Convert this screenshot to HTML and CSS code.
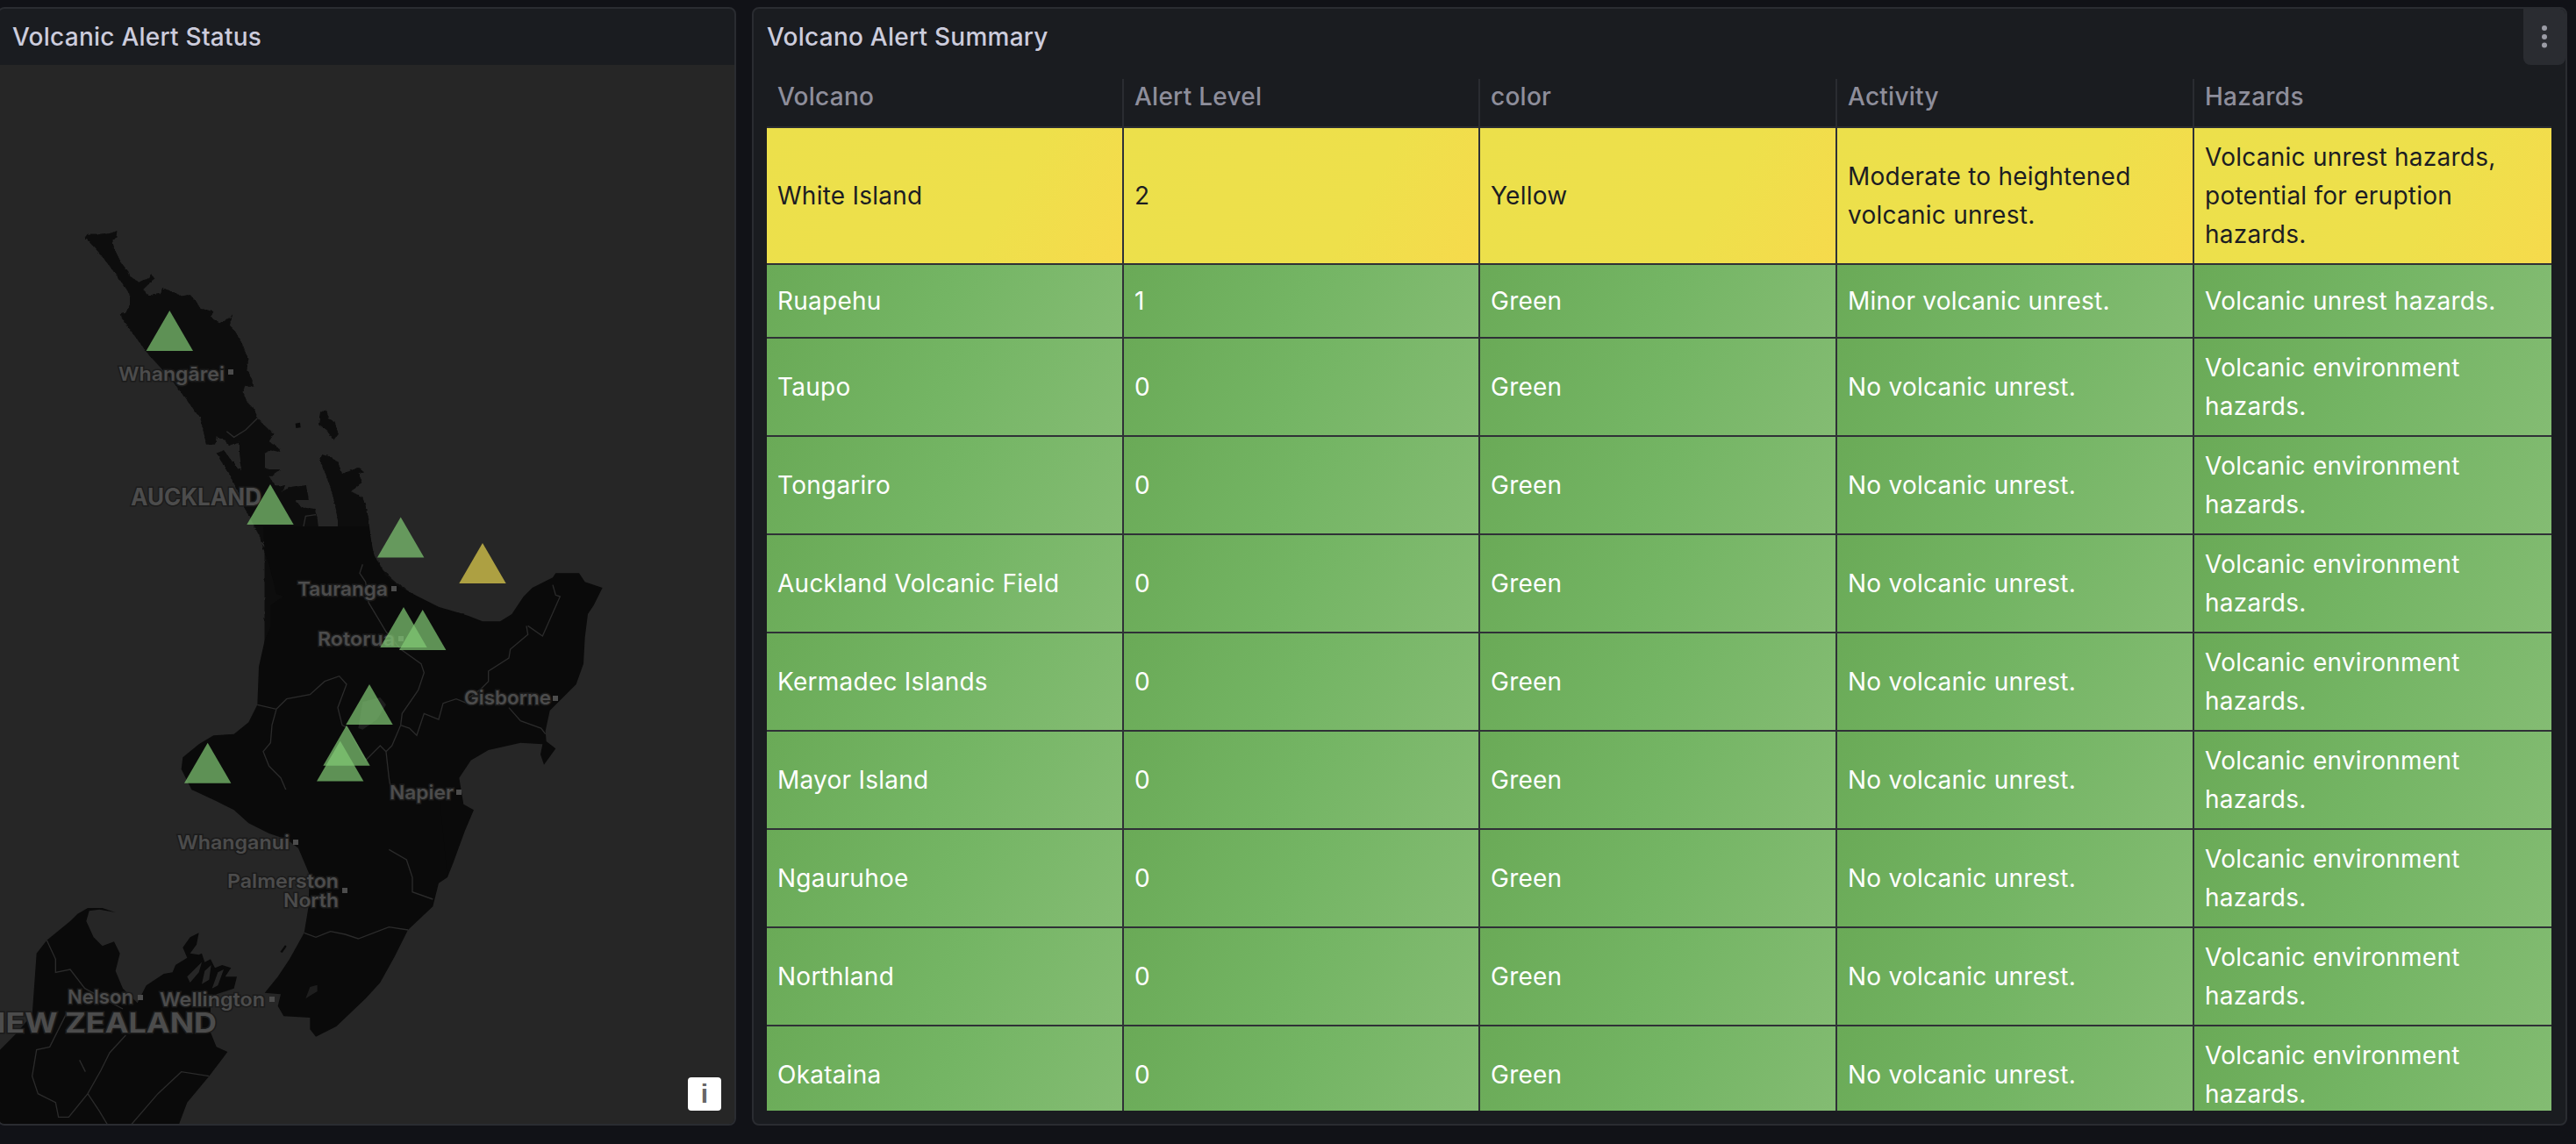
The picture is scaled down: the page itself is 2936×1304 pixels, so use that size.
FILE: index.html
```html
<!DOCTYPE html>
<html lang="en">

<head>
    <meta charset="UTF-8">
    <title>Volcano Alerts</title>
    <link rel="stylesheet" href="styles.css">
</head>

<body>
    <section class="panel map-panel">
        <h2 class="panel-title">Volcanic Alert Status</h2>
        <div class="map">
            <svg class="map-svg" viewBox="0 0 839 1207" width="839" height="1207">
                <defs>
                    <polygon id="tri" points="0,0 26.7,46 -26.7,46"></polygon>
                    <filter id="rough" x="-5%" y="-5%" width="110%" height="110%">
                        <feTurbulence type="fractalNoise" baseFrequency=".045" numOctaves="3" seed="4"></feTurbulence>
                        <feDisplacementMap in="SourceGraphic" scale="9" xChannelSelector="R" yChannelSelector="G"></feDisplacementMap>
                    </filter>
                </defs>
                <g transform="translate(0,-74)">
                    <!-- north island, top part traced on a 3x crop -->
                    <g transform="translate(80,250) scale(.33333)">
                        <path class="land" filter="url(#rough)" d="M50 62 60 50 100 50 135 48 160 40 158 60 145 75 150 100 175 150 200 180 205 195 235 215 245 210 272 200 275 185 290 205 265 225 250 240 270 260 310 255 315 235 345 245 380 262 410 258 430 280 445 305 490 315 480 335 510 355 545 340 555 325 545 365 565 385 590 430 610 480 605 510 620 545 628 573 600 565 590 590 605 625 630 650 640 680 695 735 680 760 715 785 718 795 685 790 665 800 665 850 680 855 720 855 680 880 700 910 735 910 725 930 755 915 810 910 815 960 770 960 790 985 835 990 845 1020 850 1075 880 1085 915 1065 915 1030 905 970 885 900 855 825 860 805 885 810 915 830 930 870 985 850 1005 865 985 870 1000 900 960 930 1000 950 1020 1020 1030 1120 1040 1150 1070 1200 1120 1245 1190 1295 1260 1335 1350 1350 1000 1500 665 1500 665 1140 650 1090 625 1040 595 985 570 920 530 850 500 800 525 790 570 850 585 860 580 800 580 760 540 775 530 755 500 745 495 770 465 770 455 720 445 680 400 620 340 540 270 465 210 385 170 325 190 320 205 290 205 260 190 235 150 180 100 115Z"></path>
                        <path class="land" filter="url(#rough)" d="M855 660 875 650 885 680 905 695 917 735 900 755 880 725 850 700Z"></path>
                        <path class="land" d="M770 698 786 695 788 712 772 714Z"></path>
                        <path class="region" d="M660 1105 730 1080 795 1065 805 1015 840 1010M640 680 600 720 560 745 535 725M655 1105 680 1140"></path>
                        <path class="lake" d="M805 1160 822 1158 828 1180 812 1184Z"></path>
                    </g>
                    <!-- middle of the north island -->
                    <g transform="translate(200,600) scale(.33333)">
                        <path class="land" d="M680 105 720 170 760 205 830 240 900 275 1000 305 1050 325 1110 325 1150 300 1190 240 1220 210 1290 175 1300 160 1380 160 1400 190 1460 210 1430 270 1410 300 1400 380 1395 470 1370 540 1310 600 1280 630 1265 700 1268 735 1300 760 1260 815 1248 780 1255 745 1180 740 1070 765 1010 800 970 860 985 950 1020 970 990 1040 950 1150 930 1200 400 1000 55 900 20 830 25 790 80 745 130 715 200 710 250 670 280 610 285 480 305 390 325 345 325 270 345 255 370 240 345 230 320 130 305 90 300 0 660 0Z"></path>
                        <path class="region" d="M640 130 630 160 650 190 660 260 690 310 720 360 770 420 840 470 850 500 830 560 775 640 770 680 740 750 720 770 730 860 745 950 750 1000 730 1070 725 1105 770 1120 805 1170 810 1200M770 680 800 690 825 715 850 640 900 660 915 605 960 590 1010 610M1200 340 1205 370 1145 420 1140 450 1070 495 1070 530 1040 560 990 595M1290 200 1300 235 1315 240 1255 375 1205 340M1140 620 1180 665 1250 690 1265 710M280 610 345 625 380 590 460 575 510 530 560 512 585 540 555 620 570 680 590 690 650 800 700 750 720 770M345 625 330 680 325 740 300 770 320 820 360 860 390 930 385 980 330 1050"></path>
                        <path class="lake" d="M640 600 700 585 720 610 690 660 640 695 625 690Z"></path>
                    </g>
                    <!-- lower north island and top of the south island -->
                    <g transform="translate(0,900) scale(.33333)">
                        <path class="land" d="M1530 300 1500 320 1480 400 1395 480 1350 570 1300 660 1250 715 1150 810 1080 845 1060 820 1060 780 970 775 950 740 960 700 905 695 950 640 990 580 1040 490 1055 400 1058 290 1020 200 980 170 920 150 850 115 800 70 740 40 655 0 1500 0Z"></path>
                        <path class="land" d="M0 890 50 840 110 770 125 560 160 515 240 450 265 425 300 405 350 405 395 420 340 410 305 415 295 450 320 505 350 535 390 520 410 560 395 620 420 680 470 730 500 670 560 630 590 625 600 600 640 575 625 540 650 505 680 490 672 530 650 560 680 565 690 560 700 590 720 580 735 610 760 600 790 610 770 640 810 640 800 680 740 700 720 740 720 830 740 880 778 897 715 980 640 1070 610 1150 0 1150Z"></path>
                        <path class="land" d="M958 555 975 532 980 536 965 558Z"></path>
                        <path class="sea" d="M640 640 690 590 680 625 650 660ZM700 620 722 600 715 650 690 665ZM745 625 765 615 745 670 725 680Z"></path>
                        <path class="region" d="M1330 205 1390 240 1410 300 1410 350 1480 375M1040 490 1080 505 1130 485 1180 495 1225 510 1330 470 1395 480M160 515 190 580 190 625 240 615 290 680 420 750M230 760 170 880 125 890 110 980 130 1040 190 1070 200 1120 235 1120 300 1040 345 960 375 900 430 840M300 1040 340 1100 370 1150M445 1150 540 1040 620 965 715 980M272 925 292 965"></path>
                        <path class="lake" d="M1045 715 1060 675 1085 668 1085 690 1060 705Z"></path>
                    </g>

                    <g class="labels">
                        <text x="135" y="434" textLength="121" lengthAdjust="spacingAndGlyphs">Whangārei</text>
                        <text x="339" y="679" textLength="103" lengthAdjust="spacingAndGlyphs">Tauranga</text>
                        <text x="362" y="736" textLength="88" lengthAdjust="spacingAndGlyphs">Rotorua</text>
                        <text x="529" y="803" textLength="99" lengthAdjust="spacingAndGlyphs">Gisborne</text>
                        <text x="444" y="911" textLength="73" lengthAdjust="spacingAndGlyphs">Napier</text>
                        <text x="202" y="968" textLength="128" lengthAdjust="spacingAndGlyphs">Whanganui</text>
                        <text x="259" y="1012" textLength="127" lengthAdjust="spacingAndGlyphs">Palmerston</text>
                        <text x="323" y="1034" textLength="63" lengthAdjust="spacingAndGlyphs">North</text>
                        <text x="77" y="1144" textLength="75" lengthAdjust="spacingAndGlyphs">Nelson</text>
                        <text x="182" y="1147" textLength="120" lengthAdjust="spacingAndGlyphs">Wellington</text>
                        <text class="label-big" x="149" y="576" textLength="149" lengthAdjust="spacingAndGlyphs">AUCKLAND</text>
                        <text class="label-big" x="-21" y="1177" textLength="268" lengthAdjust="spacingAndGlyphs">NEW ZEALAND</text>
                    </g>
                    <g class="city-dots">
                        <rect x="260" y="421" width="6" height="6"></rect>
                        <rect x="446" y="668" width="6" height="6"></rect>
                        <rect x="454" y="725" width="6" height="6"></rect>
                        <rect x="630" y="793" width="6" height="6"></rect>
                        <rect x="520" y="900" width="6" height="6"></rect>
                        <rect x="334" y="957" width="6" height="6"></rect>
                        <rect x="390" y="1012" width="6" height="6"></rect>
                        <rect x="157" y="1134" width="6" height="6"></rect>
                        <rect x="307" y="1136" width="6" height="6"></rect>
                    </g>

                    <g class="tri-green">
                        <use href="#tri" x="193.3" y="354"></use>
                        <use href="#tri" x="308" y="552"></use>
                        <use href="#tri" x="456.7" y="589.5"></use>
                        <use href="#tri" x="460" y="692"></use>
                        <use href="#tri" x="481.7" y="695"></use>
                        <use href="#tri" x="421" y="780"></use>
                        <use href="#tri" x="395" y="826.7"></use>
                        <use href="#tri" x="387.7" y="844.5"></use>
                        <use href="#tri" x="236.7" y="846.7"></use>
                    </g>
                    <use class="tri-yellow" href="#tri" x="550" y="619"></use>
                </g>
            </svg>
            <button class="info-btn">i</button>
        </div>
    </section>

    <section class="panel table-panel">
        <h2 class="panel-title">Volcano Alert Summary</h2>
        <button class="menu-btn">
            <svg viewBox="0 0 8 30" width="8" height="30">
                <circle cx="4" cy="5" r="3"></circle>
                <circle cx="4" cy="15" r="3"></circle>
                <circle cx="4" cy="24.500" r="3"></circle>
            </svg>
        </button>
        <div class="table-wrap">
            <table>
                <colgroup>
                    <col class="col-a">
                    <col class="col-b">
                    <col class="col-a">
                    <col class="col-a">
                    <col class="col-a">
                </colgroup>
                <thead>
                    <tr>
                        <th>Volcano</th>
                        <th>Alert Level</th>
                        <th>color</th>
                        <th>Activity</th>
                        <th>Hazards</th>
                    </tr>
                </thead>
                <tbody>
                    <tr class="yellow">
                        <td>White Island</td>
                        <td>2</td>
                        <td>Yellow</td>
                        <td>Moderate to heightened volcanic unrest.</td>
                        <td>Volcanic unrest hazards, potential for eruption hazards.</td>
                    </tr>
                    <tr class="short">
                        <td>Ruapehu</td>
                        <td>1</td>
                        <td>Green</td>
                        <td>Minor volcanic unrest.</td>
                        <td>Volcanic unrest hazards.</td>
                    </tr>
                    <tr>
                        <td>Taupo</td>
                        <td>0</td>
                        <td>Green</td>
                        <td>No volcanic unrest.</td>
                        <td>Volcanic environment hazards.</td>
                    </tr>
                    <tr>
                        <td>Tongariro</td>
                        <td>0</td>
                        <td>Green</td>
                        <td>No volcanic unrest.</td>
                        <td>Volcanic environment hazards.</td>
                    </tr>
                    <tr>
                        <td>Auckland Volcanic Field</td>
                        <td>0</td>
                        <td>Green</td>
                        <td>No volcanic unrest.</td>
                        <td>Volcanic environment hazards.</td>
                    </tr>
                    <tr>
                        <td>Kermadec Islands</td>
                        <td>0</td>
                        <td>Green</td>
                        <td>No volcanic unrest.</td>
                        <td>Volcanic environment hazards.</td>
                    </tr>
                    <tr>
                        <td>Mayor Island</td>
                        <td>0</td>
                        <td>Green</td>
                        <td>No volcanic unrest.</td>
                        <td>Volcanic environment hazards.</td>
                    </tr>
                    <tr>
                        <td>Ngauruhoe</td>
                        <td>0</td>
                        <td>Green</td>
                        <td>No volcanic unrest.</td>
                        <td>Volcanic environment hazards.</td>
                    </tr>
                    <tr>
                        <td>Northland</td>
                        <td>0</td>
                        <td>Green</td>
                        <td>No volcanic unrest.</td>
                        <td>Volcanic environment hazards.</td>
                    </tr>
                    <tr>
                        <td>Okataina</td>
                        <td>0</td>
                        <td>Green</td>
                        <td>No volcanic unrest.</td>
                        <td>Volcanic environment hazards.</td>
                    </tr>
                </tbody>
            </table>
        </div>
    </section>
</body>

</html>
```

FILE: styles.css
```css
* {
    box-sizing: border-box;
}

html,
body {
    height: 100%;
}

body {
    margin: 0;
    padding: 8px 10px 21px 0;
    display: flex;
    gap: 18px;
    overflow: hidden;
    background-color: #111217;
    font-family: Inter, "Liberation Sans", sans-serif;
    font-size: 28px;
    letter-spacing: .25px;
    color: #fff;
}

.panel {
    position: relative;
    display: flex;
    flex-direction: column;
    overflow: hidden;
    background-color: #1a1c20;
    border: 2px solid #2a2c31;
    border-radius: 8px;
}

.map-panel {
    width: 842px;
    margin-left: -3px;
    flex-shrink: 0;
}

.table-panel {
    flex: 1;
    min-width: 0;
}

.panel-title {
    margin: 0;
    height: 64px;
    flex-shrink: 0;
    padding-left: 15px;
    font-size: 28px;
    font-weight: 500;
    line-height: 64px;
    color: #ccccdc;
}

/* map */
.map {
    position: relative;
    flex: 1;
    overflow: hidden;
    background-color: #262626;
}

.map-svg {
    display: block;
    margin-left: 1px;
}

.land {
    fill: #0a0a0a;
}

.sea {
    fill: #262626;
}

.region {
    fill: none;
    stroke: #2b2b2b;
    stroke-width: 4;
}

.lake {
    fill: #1e1e1e;
}

.labels text {
    font-family: Inter, "Open Sans", sans-serif;
    font-size: 22px;
    font-weight: 600;
    letter-spacing: 0;
    fill: #4c4c4c;
    stroke: #1b1b1b;
    stroke-width: 3px;
    paint-order: stroke;
}

.labels .label-big {
    font-size: 27px;
    font-weight: 700;
}

.labels text:last-child {
    font-size: 31px;
}

.city-dots {
    fill: #4c4c4c;
}

.tri-green use {
    fill: #82ca75;
    opacity: .7;
}

.tri-yellow {
    fill: #eeda4f;
    opacity: .68;
}

.info-btn {
    position: absolute;
    right: 15px;
    bottom: 15px;
    width: 38px;
    height: 38px;
    padding: 0;
    border: 0;
    border-radius: 4px;
    background-color: #fff;
    font-family: "Liberation Sans", sans-serif;
    font-size: 30px;
    font-weight: 700;
    line-height: 38px;
    color: #666;
}

/* table */
.menu-btn {
    position: absolute;
    top: 0;
    right: 0;
    display: flex;
    align-items: center;
    justify-content: center;
    width: 48px;
    height: 64px;
    padding: 0;
    border: 0;
    border-radius: 0 6px 8px 8px;
    background-color: #2a2c31;
}

.menu-btn svg {
    fill: #9b9ca5;
}

.table-wrap {
    flex: 1;
    margin: 16px 16px 15px 15px;
    min-height: 0;
    overflow: hidden;
}

table {
    width: 2034px;
    table-layout: fixed;
    border-collapse: separate;
    border-spacing: 0;
}

.col-a {
    width: 407px;
}

.col-b {
    width: 406px;
}

th {
    height: 56px;
    padding: 0 12px 14px;
    border-right: 2px solid #2a2c31;
    border-bottom: 2px solid #2a2c31;
    text-align: left;
    font-weight: 500;
    line-height: 40px;
    color: #8e8e9b;
}

td {
    padding: 11px 12px;
    border-right: 2px solid #2f3136;
    border-bottom: 2px solid #2f3136;
    line-height: 44px;
    vertical-align: middle;
    background-image: linear-gradient(120deg, #6aaa57, #74b564 50%, #84bc73);
}

th:last-child,
td:last-child {
    border-right: 0;
}

.short td {
    height: 84px;
}

.yellow td {
    background-image: linear-gradient(120deg, #ece04b, #eee04b 65%, #f6da4c);
    color: #1c1d22;
}
```
